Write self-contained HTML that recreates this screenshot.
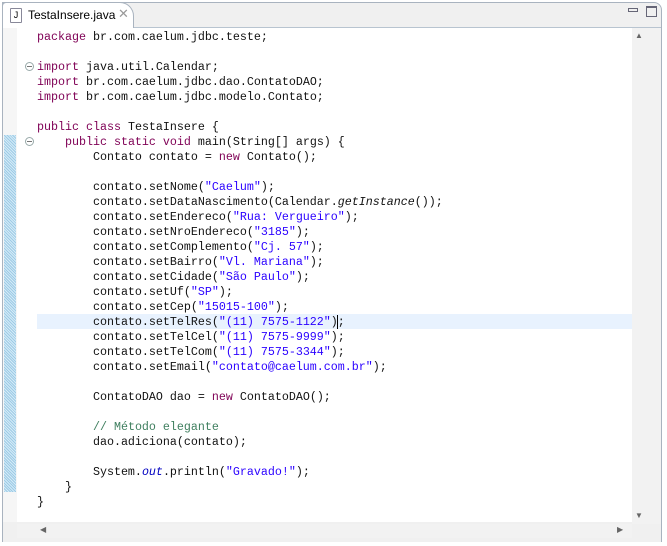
<!DOCTYPE html>
<html><head><meta charset="utf-8"><style>
body{margin:0;width:667px;height:546px;background:#fff;position:relative;overflow:hidden;font-family:"Liberation Sans",sans-serif}
.frame{position:absolute;left:2px;top:2px;width:660px;height:540px;border:1px solid #a9b3bf;border-radius:0 8px 0 0;background:#f0f0f0;box-sizing:border-box}
.tab{position:absolute;left:2px;top:2px;width:132px;height:26px;background:#fff;border:1px solid #a9b3bf;border-bottom:none;border-radius:4px 14px 0 0;box-sizing:border-box;font-size:12px;color:#000}
.edit{position:absolute;left:3px;top:27px;width:658px;height:514px;border-top:1px solid #b8c4d0;background:#f0f0f0}
.white{position:absolute;left:17px;top:28px;width:615px;height:494px;background:#fff}
.ruler{position:absolute;left:3px;top:28px;width:14px;height:494px;background:#f6f6f6}
.hatch{position:absolute;left:4px;top:135px;width:12px;height:357px;background:repeating-linear-gradient(45deg,#9ecbe6 0 1px,#d4ebf7 1px 2px)}
.hl{position:absolute;left:37px;top:314px;width:595px;height:15px;background:#e8f2fe}
pre{position:absolute;left:37px;top:30px;margin:0;font-family:"Liberation Mono",monospace;font-size:11.67px;line-height:15px;color:#111}
.k{color:#7f0055}.s{color:#2a00ff}.c{color:#3f7f5f}.i{font-style:italic}.o{color:#0000c0;font-style:italic}
.fold{position:absolute;width:9px;height:9px;border:1px solid #9aa;border-radius:50%;box-sizing:border-box;background:#fff}
.fold:after{content:"";position:absolute;left:1px;top:3px;width:5px;height:1px;background:#777}
</style></head><body>
<div class="frame"></div>
<div class="edit"></div>
<div class="white"></div>
<div class="ruler"></div>
<div class="hatch"></div>
<div class="tab"><span style="position:absolute;left:7px;top:5px;width:10px;height:13px;border:1px solid #889;border-radius:1px;font-size:9px;line-height:12px;text-align:center;background:#fff">J</span><span style="position:absolute;left:25px;top:5px">TestaInsere.java</span><span style="position:absolute;left:115px;top:3px;color:#999;font-size:13px">✕</span></div>
<div style="position:absolute;left:628px;top:8px;width:10px;height:4px;border:1px solid #667;box-sizing:border-box"></div>
<div style="position:absolute;left:646px;top:6px;width:11px;height:11px;border:1px solid #667;border-top-width:2px;box-sizing:border-box"></div>
<div style="position:absolute;left:632px;top:28px;width:29px;height:496px;background:#f2f2f2"></div>
<div style="position:absolute;left:635px;top:31px;font-size:8px;color:#666">▲</div>
<div style="position:absolute;left:635px;top:511px;font-size:8px;color:#666">▼</div>
<div style="position:absolute;left:17px;top:524px;width:615px;height:14px;background:#f2f2f2"></div>
<div style="position:absolute;left:40px;top:525px;font-size:8px;color:#666">◀</div>
<div style="position:absolute;left:617px;top:525px;font-size:8px;color:#666">▶</div>
<div class="fold" style="left:25px;top:62px"></div>
<div class="fold" style="left:25px;top:137px"></div>
<div class="hl"></div>
<pre><span class="k">package</span> br.com.caelum.jdbc.teste;

<span class="k">import</span> java.util.Calendar;
<span class="k">import</span> br.com.caelum.jdbc.dao.ContatoDAO;
<span class="k">import</span> br.com.caelum.jdbc.modelo.Contato;

<span class="k">public class</span> TestaInsere {
    <span class="k">public static void</span> main(String[] args) {
        Contato contato = <span class="k">new</span> Contato();

        contato.setNome(<span class="s">"Caelum"</span>);
        contato.setDataNascimento(Calendar.<span class="i">getInstance</span>());
        contato.setEndereco(<span class="s">"Rua: Vergueiro"</span>);
        contato.setNroEndereco(<span class="s">"3185"</span>);
        contato.setComplemento(<span class="s">"Cj. 57"</span>);
        contato.setBairro(<span class="s">"Vl. Mariana"</span>);
        contato.setCidade(<span class="s">"São Paulo"</span>);
        contato.setUf(<span class="s">"SP"</span>);
        contato.setCep(<span class="s">"15015-100"</span>);
        contato.setTelRes(<span class="s">"(11) 7575-1122"</span>)<span style="border-left:1px solid #000;margin-left:-1px">;</span>
        contato.setTelCel(<span class="s">"(11) 7575-9999"</span>);
        contato.setTelCom(<span class="s">"(11) 7575-3344"</span>);
        contato.setEmail(<span class="s">"contato@caelum.com.br"</span>);

        ContatoDAO dao = <span class="k">new</span> ContatoDAO();

        <span class="c">// Método elegante</span>
        dao.adiciona(contato);

        System.<span class="o">out</span>.println(<span class="s">"Gravado!"</span>);
    }
}</pre>
</body></html>
